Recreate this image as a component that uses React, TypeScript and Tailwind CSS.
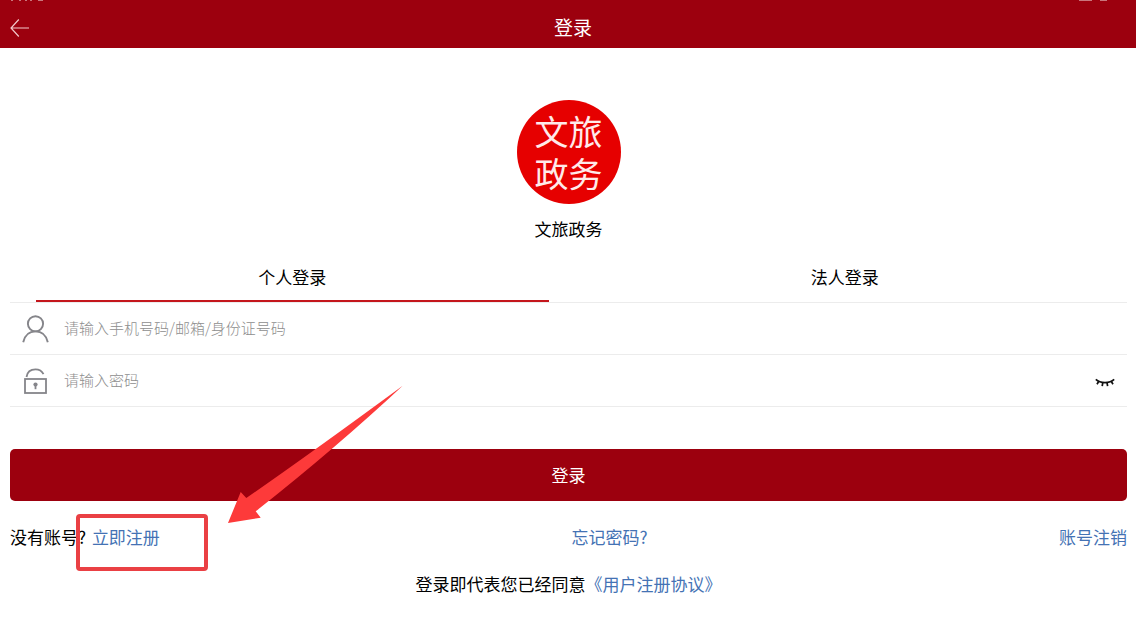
import React from "react";

const UserIcon: React.FC = () => (
  <svg width="28" height="28" viewBox="0 0 28 28" fill="none" stroke="#85858a" strokeWidth="1.9">
    <circle cx="13.500" cy="8.800" r="7.600" />
    <path d="M1.200 27.200C2.800 20.400 7.500 16.400 13.500 16.400s10.700 4 12.300 10.800" />
  </svg>
);

const LockIcon: React.FC = () => (
  <svg width="28" height="28" viewBox="0 0 28 28" fill="none" stroke="#85858a" strokeWidth="1.800">
    <rect x="3" y="12" width="21" height="14" />
    <path d="M4.500 10C5.200 5.200 8.800 2.400 13.500 2.400c3.600 0 6.400 1.600 8 4.800" />
    <circle cx="13.500" cy="17.500" r="2.100" fill="#85858a" stroke="none" />
    <path d="M13.500 18v4.200" />
  </svg>
);

const ClosedEyeIcon: React.FC = () => (
  <svg width="20" height="12" viewBox="0 0 20 12" fill="none" stroke="#111" strokeWidth="1.700">
    <path d="M.8 2.400c2.400 2.200 5.400 3.200 9.200 3.200s6.800-1 9.200-3.200" />
    <path d="M3.800 4.200 2 7.200M7.800 5.500 7.200 9.200M12 5.500l.6 3.700M16.200 4.200 18 7.200" />
  </svg>
);

interface FieldProps {
  id: string;
  label: string;
  type: string;
  icon: React.ReactNode;
  children?: React.ReactNode;
}

const Field: React.FC<FieldProps> = ({ id, label, type, icon, children }) => (
  <div className="flex h-[52px] items-center border-b border-[#ececec] px-3">
    <label htmlFor={id} aria-label={label} className="shrink-0">
      {icon}
    </label>
    <input
      id={id}
      type={type}
      placeholder={label}
      className="ml-3.5 min-w-0 flex-1 bg-transparent pb-0.5 text-[15px] font-light outline-none placeholder:text-[#8e8e8e]"
    />
    {children}
  </div>
);

const Header: React.FC = () => (
  <header className="relative flex h-12 items-center bg-[#9c000e] pl-2.5 pr-5 pt-2 text-white">
    <svg className="absolute left-2.5 top-0" width="36" height="2" viewBox="0 0 36 2" fill="#c9757c">
      <path d="M1 0h2v1H1zM9 0h2v1H9zM15 0h2v1h-2zM20 0h2v1h-2zM28 0h5v1h-5z" />
    </svg>
    <svg className="absolute right-7 top-0" width="30" height="2" viewBox="0 0 30 2" fill="#c9757c">
      <path d="M1 0h13v1H1zM22 0h7v1h-7z" />
    </svg>
    <button type="button" aria-label="返回">
      <svg width="20" height="20" viewBox="0 0 20 20" fill="none" stroke="#f3c9cc" strokeWidth="1.200">
        <path d="M8.800 1.500 1 10l7.800 8.500M1 10h18" />
      </svg>
    </button>
    <h1 className="flex-1 pb-0.5 text-center text-[19px] leading-6">登录</h1>
  </header>
);

const App: React.FC = () => {
  return (
    <div className="bg-white font-['Noto_Sans_CJK_SC',sans-serif] text-[17px] leading-6 text-black">
      <Header />
      <main className="pl-2.5 pr-[9px] pt-[52px]">
        <div className="flex flex-col items-center">
          <div className="flex size-[104px] items-center justify-center rounded-full bg-[#e60000]">
            <p className="w-[68px] break-all text-[34px] leading-[42px] text-[#ffeaea]">文旅政务</p>
          </div>
          <p className="mt-[13px]">文旅政务</p>
        </div>

        <form>
          <div className="mt-5 flex border-b border-[#ececec] px-1.5" role="tablist">
            <button type="button" role="tab" aria-selected="true" className="flex-1 px-5">
              <span className="block h-[41px] border-b-2 border-[#c4161c] pt-1">个人登录</span>
            </button>
            <button type="button" role="tab" aria-selected="false" className="flex-1 px-5">
              <span className="block h-[41px] pt-1">法人登录</span>
            </button>
          </div>

          <Field id="account" type="text" label="请输入手机号码/邮箱/身份证号码" icon={<UserIcon />} />
          <Field id="password" type="password" label="请输入密码" icon={<LockIcon />}>
            <button type="button" aria-label="显示密码" className="pt-1">
              <ClosedEyeIcon />
            </button>
          </Field>

          <button
            type="submit"
            className="mt-[42px] h-[52px] w-full rounded-[5px] bg-[#9c000e] text-white"
          >
            登录
          </button>
        </form>

        <div className="relative mt-6 flex justify-between">
          <p>
            没有账号?{" "}
            <a href="#register" className="ml-0.5 text-[#4472b4]">
              立即注册
            </a>
          </p>
          <a href="#forgot" className="text-[#4472b4]">
            忘记密码?
          </a>
          <a href="#cancel" className="text-[#4472b4]">
            账号注销
          </a>
          <div className="pointer-events-none absolute -top-[11px] left-[66px] h-[57px] w-[132px] rounded-[4px] border-4 border-[#ea4044]" />
          <svg
            className="pointer-events-none absolute -top-[140px] left-[217px]"
            width="177"
            height="139"
            viewBox="0 0 177 139"
            fill="#fd3a3a"
          >
            <path d="M1 138 13.700 107 19.300 113 Q80 71 175.700.7 110 62 28.700 126.300L33.700 132.700z" />
          </svg>
        </div>

        <p className="mt-[23px] pb-5 text-center">
          登录即代表您已经同意
          <a href="#agreement" className="text-[#4472b4]">
            《用户注册协议》
          </a>
        </p>
      </main>
    </div>
  );
};

export default App;
